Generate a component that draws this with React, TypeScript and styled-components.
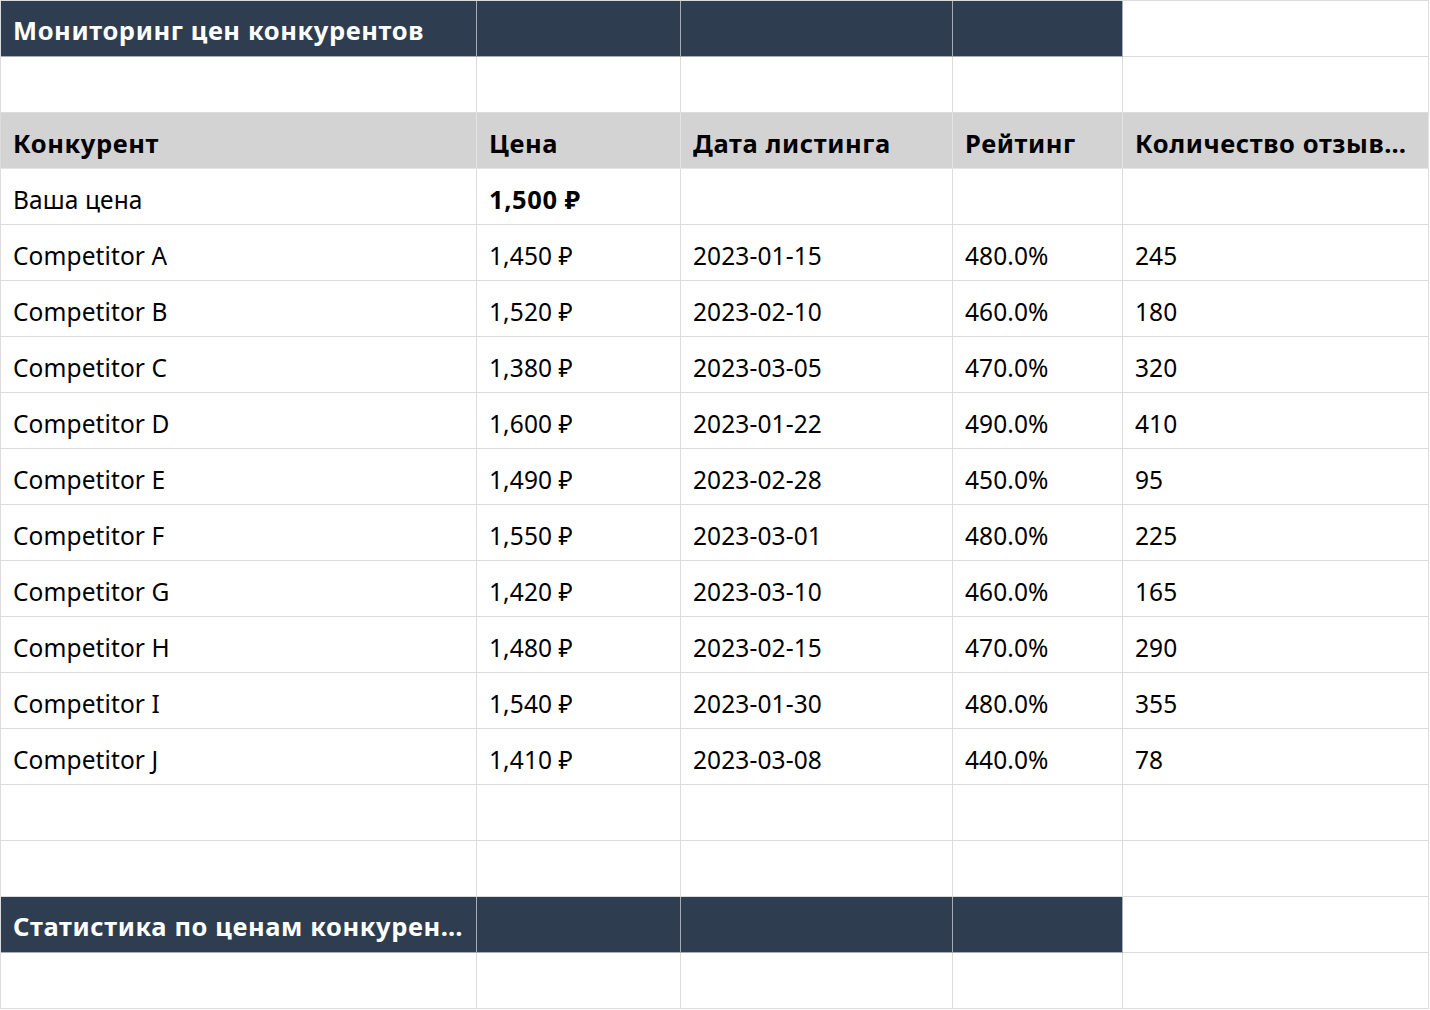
import styled, { createGlobalStyle, css } from "styled-components";

const GlobalStyle = createGlobalStyle`
  html, body {
    margin: 0;
    padding: 0;
    background: #ffffff;
  }
  body {
    font-family: "Noto Sans", "Open Sans", sans-serif;
  }
`;

type Kind = "plain" | "dark" | "head";

const competitors = [
  ["Competitor A", "1,450 ₽", "2023-01-15", "480.0%", "245"],
  ["Competitor B", "1,520 ₽", "2023-02-10", "460.0%", "180"],
  ["Competitor C", "1,380 ₽", "2023-03-05", "470.0%", "320"],
  ["Competitor D", "1,600 ₽", "2023-01-22", "490.0%", "410"],
  ["Competitor E", "1,490 ₽", "2023-02-28", "450.0%", "95"],
  ["Competitor F", "1,550 ₽", "2023-03-01", "480.0%", "225"],
  ["Competitor G", "1,420 ₽", "2023-03-10", "460.0%", "165"],
  ["Competitor H", "1,480 ₽", "2023-02-15", "470.0%", "290"],
  ["Competitor I", "1,540 ₽", "2023-01-30", "480.0%", "355"],
  ["Competitor J", "1,410 ₽", "2023-03-08", "440.0%", "78"],
];

const empty = ["", "", "", "", ""];

const App = () => {
  const renderRow = (cells: string[], kind: Kind, key: string, bold?: number[]) =>
    cells.map((text, i) => {
      const k: Kind = kind === "dark" && i === 4 ? "plain" : kind;
      return (
        <Cell key={key + i} $kind={k} $bold={bold?.includes(i)}>
          <CellText>{text}</CellText>
        </Cell>
      );
    });

  return (
    <>
      <GlobalStyle />
      <Sheet>
        {renderRow(["Мониторинг цен конкурентов", "", "", "", ""], "dark", "t")}
        {renderRow(empty, "plain", "e1")}
        {renderRow(
          ["Конкурент", "Цена", "Дата листинга", "Рейтинг", "Количество отзывов"],
          "head",
          "h"
        )}
        {renderRow(["Ваша цена", "1,500 ₽", "", "", ""], "plain", "y", [1])}
        {competitors.map((row, r) => renderRow(row, "plain", "c" + r))}
        {renderRow(empty, "plain", "e2")}
        {renderRow(empty, "plain", "e3")}
        {renderRow(["Статистика по ценам конкурентов", "", "", "", ""], "dark", "s")}
        {renderRow(empty, "plain", "e4")}
      </Sheet>
    </>
  );
};

export default App;

const boldText = css`
  font-weight: 700;
  font-size: 25.5px;
  letter-spacing: 0.6px;
`;

const Sheet = styled.div`
  display: grid;
  grid-template-columns: 476px 204px 272px 170px 306px;
  grid-auto-rows: 56px;
  width: 1428px;
  border-top: 1px solid #dcdcdc;
  border-left: 1px solid #dcdcdc;
`;

const Cell = styled.div<{ $kind: Kind; $bold?: boolean }>`
  display: flex;
  align-items: center;
  padding: 5px 12px 0 12px;
  box-sizing: border-box;
  min-width: 0;
  border-right: 1px solid #dcdcdc;
  border-bottom: 1px solid #dcdcdc;
  background: #ffffff;
  color: #000000;
  font-size: 24.5px;
  font-weight: 400;
  letter-spacing: 0.1px;
  ${(p) => p.$bold && boldText}

  ${(p) =>
    p.$kind === "dark" &&
    css`
      ${boldText};
      background: #2e3e50;
      color: #ffffff;
      border-right-color: #a8adb3;
      border-bottom-color: #a8adb3;
      padding-top: 3px;
    `}

  ${(p) =>
    p.$kind === "head" &&
    css`
      ${boldText};
      background: #d3d3d3;
      border-right-color: #e4e4e4;
      border-bottom-color: #e4e4e4;
    `}
`;

const CellText = styled.span`
  white-space: nowrap;
  overflow: hidden;
  text-overflow: ellipsis;
`;
